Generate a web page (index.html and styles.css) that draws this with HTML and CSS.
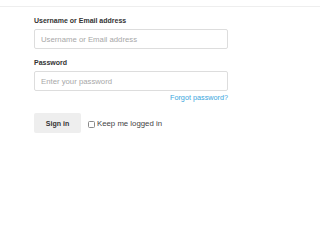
FILE: index.html
```html
<!DOCTYPE html>
<html lang="en">
<head>
<meta charset="utf-8">
<title>Sign in</title>
<link rel="stylesheet" href="styles.css">
</head>
<body>
<div class="topbar"></div>
<form class="login">
  <div class="group">
    <label class="label" for="user">Username or Email address</label>
    <input class="field" id="user" type="text" placeholder="Username or Email address">
  </div>
  <div class="group">
    <label class="label" for="pass">Password</label>
    <input class="field" id="pass" type="password" placeholder="Enter your password">
    <div class="forgot"><a href="#">Forgot password?</a></div>
  </div>
  <div class="actions">
    <button class="signin" type="button">Sign in</button>
    <label class="keep"><input class="check" type="checkbox"><span>Keep me logged in</span></label>
  </div>
</form>
</body>
</html>
```
FILE: styles.css
```css
html, body {
  margin: 0;
  background: #ffffff;
  font-family: "Liberation Sans", Arial, sans-serif;
  color: #333333;
}
.topbar {
  height: 6px;
  border-bottom: 1px solid #eeeeee;
}
.login {
  margin: 0 0 0 34px;
  width: 194px;
  padding-top: 10px;
}
.group + .group {
  margin-top: 10px;
}
.label {
  display: block;
  font-size: 7px;
  line-height: 8px;
  font-weight: 700;
  color: #333333;
  margin-bottom: 4px;
}
.field {
  display: block;
  box-sizing: border-box;
  width: 100%;
  height: 20px;
  margin: 0;
  padding: 0 6px;
  border: 1px solid #dddddd;
  border-radius: 2px;
  background: #ffffff;
  font-family: "Liberation Sans", Arial, sans-serif;
  font-size: 7.75px;
  color: #333333;
  outline: none;
}
.field::placeholder {
  color: #a8a8a8;
}
.forgot {
  margin-top: 3px;
  text-align: right;
  font-size: 7.25px;
  line-height: 8px;
}
.forgot a {
  color: #3aa6dd;
  text-decoration: none;
}
.actions {
  display: flex;
  align-items: center;
  margin-top: 11px;
}
.signin {
  box-sizing: border-box;
  width: 47px;
  height: 20px;
  margin: 0;
  padding: 0;
  border: none;
  border-radius: 2px;
  background: #eeeeee;
  font-family: "Liberation Sans", Arial, sans-serif;
  font-size: 7px;
  font-weight: 700;
  color: #333333;
}
.keep {
  display: flex;
  align-items: center;
  margin-left: 7px;
  margin-top: 2px;
  font-size: 7.8px;
  line-height: 8px;
  color: #444444;
}
.check {
  appearance: none;
  -webkit-appearance: none;
  box-sizing: border-box;
  width: 7px;
  height: 7px;
  margin: 1px 2px 0 0;
  border: 1px solid #8a8a8a;
  border-radius: 1.5px;
  background: #ffffff;
}
```
